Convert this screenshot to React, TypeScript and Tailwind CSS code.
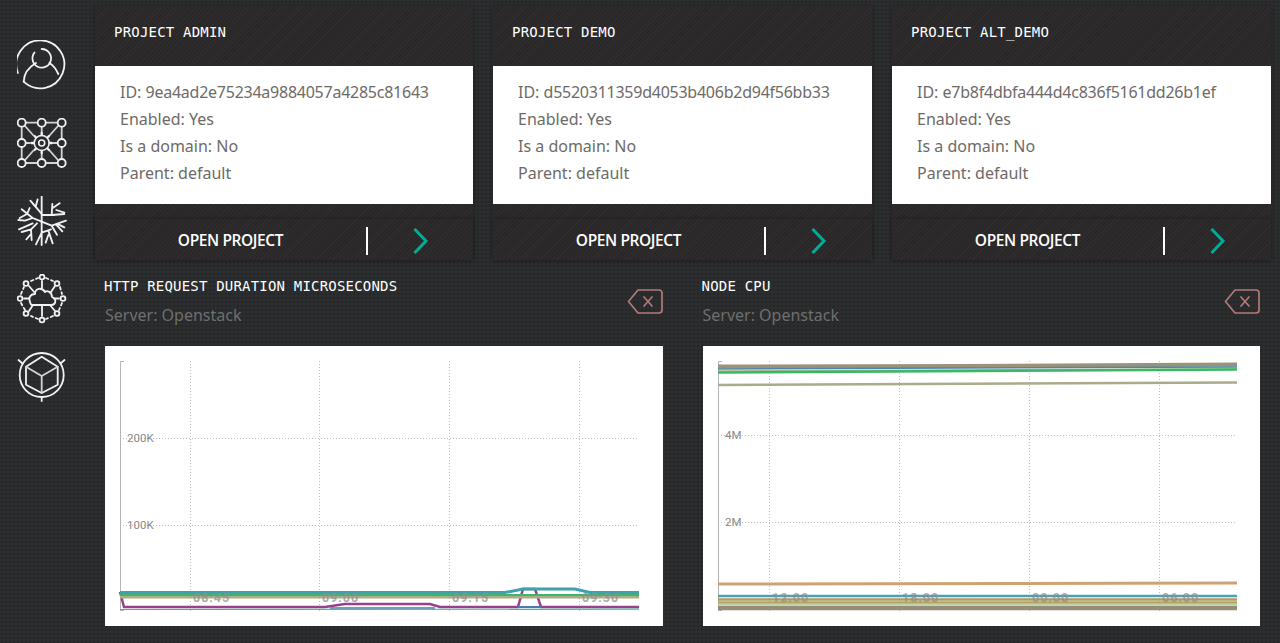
import type { ReactNode } from "react";

const projects = [
  { name: "PROJECT ADMIN", id: "9ea4ad2e75234a9884057a4285c81643" },
  { name: "PROJECT DEMO", id: "d5520311359d4053b406b2d94f56bb33" },
  { name: "PROJECT ALT_DEMO", id: "e7b8f4dbfa444d4c836f5161dd26b1ef" },
];

const stripes =
  "bg-[#2b2929] bg-[repeating-linear-gradient(135deg,#2f2d2d_0,#2f2d2d_1px,#292727_1px,#292727_3px)]";

function Icon({ children }: { children: ReactNode }) {
  return (
    <svg width="50" height="50" viewBox="0 0 50 50" fill="none" stroke="#f2f2f2" strokeWidth="1.800" strokeLinecap="round" strokeLinejoin="round">
      {children}
    </svg>
  );
}

function UserIcon() {
  return (
    <Icon>
      <path d="M6.700 41.700A24 24 0 1 0 0.900 33" />
      <path d="M6.700 41.700C7 33 12 27 19 23" />
      <path d="M24.700 9A9.300 9.300 0 1 1 17.500 12.500" />
      <path d="M32.300 23C36 25 39 29 41.300 34" />
    </Icon>
  );
}

function NetworkIcon() {
  const nodes = [
    [4.7, 4.7], [24.7, 4.7], [44.7, 4.7], [4.7, 25], [44.7, 25], [4.7, 45], [24.7, 45], [44.7, 45],
  ];
  return (
    <Icon>
      <g stroke="#d4d4d4">
        <path d="M9 4.700H20M29 4.700H40M9 45H20M29 45H40M4.700 9V21M4.700 29V41M44.700 9V21M44.700 29V41" />
        <path d="M24.700 9V14M24.700 36V41M9 25H13M36 25H40M8 8 16 17M41 8 33 17M8 42 16 33M41 42 33 33" />
      </g>
      {nodes.map(([x, y]) => (
        <circle key={`${x}-${y}`} cx={x} cy={y} r="4" />
      ))}
      <circle cx="24.700" cy="25" r="3" strokeWidth="1.600" />
      <circle cx="24.700" cy="25" r="7.500" strokeWidth="1.600" />
      <path d="M24.700 15V17M24.700 33V35M14.700 25H16.700M32.700 25H34.700M17.500 18 19 19.500M32 18 30.500 19.500M17.500 32 19 30.500M32 32 30.500 30.500" strokeWidth="2.400" />
    </Icon>
  );
}

function TreeIcon() {
  return (
    <svg width="50" height="50" viewBox="48 18 150 150" fill="none" stroke="#f2f2f2" strokeWidth="5.500" strokeLinecap="round" strokeLinejoin="round">
      <path d="M122 20V95M122 75H160M152 75 190 72M152 75 154 42M154 55 176 40M166 60 190 68" />
      <path d="M122 72 104 50 88 32M104 50 110 28M112 60 96 42" />
      <path d="M122 95 95 84 62 58M78 72 86 54M78 72 56 84M95 84 72 92 52 90M95 100 54 118" />
      <path d="M122 95 152 107 195 92M152 107 168 134M168 101 190 112M165 103 184 124" />
      <path d="M122 95V165M122 128 105 163M122 128 150 118M142 122 155 160M142 135 134 158" />
      <path d="M108 100 90 118 62 126M90 118 92 150M90 132 76 148" />
    </svg>
  );
}

function CloudIcon() {
  const nodes = [
    [25, 3], [40, 9.500], [46, 24.500], [40, 39.500], [25, 46], [9, 39.500], [3, 24.500], [9, 9.500],
  ];
  return (
    <Icon>
      <path d="M15 31H34C39 31 40 25 35 23 35 18 30 16 28 18 25 13 18 14 18 20 14 20 11 23 13 28 13.500 30 14 31 15 31Z" />
      <path d="M25 7V14M25 31V42M12 12 18 19M38 12 34 18M7 24.500H12M37 24.500H42M12 37 16 31M38 37 33 31" />
      <path d="M29 4 36 7M43 13 45 20M45 29 42 36M36 42 29 45M21 45 14 42M8 36 4 29M4 20 7 13M14 7 21 4" strokeDasharray="2.500 3" />
      {nodes.map(([x, y]) => (
        <circle key={`${x}-${y}`} cx={x} cy={y} r="2.400" />
      ))}
    </Icon>
  );
}

function CubeIcon() {
  return (
    <Icon>
      <circle cx="24.700" cy="23" r="22" />
      <path d="M24.700 45.500V49M1.500 8 5.500 11.500M47.500 8 43.500 11.500" />
      <path d="M24.700 4.700 40.700 14.700V32.700L24.700 41 9 32.700V14.700Z" />
      <path d="M9 14.700 24.700 24 40.700 14.700M24.700 24V41" stroke="#d4d4d4" />
    </Icon>
  );
}

function CloseTag() {
  return (
    <svg width="36" height="27" viewBox="0 0 36 27" fill="none" stroke="#b27a7a" strokeWidth="1.700" strokeLinecap="round" strokeLinejoin="round">
      <path d="M1.500 13.500 11 2H32C34 2 35 3 35 5V22C35 24 34 25 32 25H11Z" />
      <path d="M17 9 25 18M25 9 17 18" />
    </svg>
  );
}

function ProjectCard({ name, id }: { name: string; id: string }) {
  return (
    <div className="shadow-[0_1px_5px_#0000004d]">
      <div className={`${stripes} h-[60px] pl-[19px] pt-[17px] font-['DejaVu_Sans_Mono',monospace] text-[14px] leading-[18px] tracking-[0.2px] text-white`}>
        {name}
      </div>
      <div className="h-[138px] bg-white pl-[25px] pt-[13px] font-['Noto_Sans',sans-serif] text-[16px] leading-[27px] text-[#6e6a68]">
        <p>ID: <span className="tracking-[-0.250px]">{id}</span></p>
        <p>Enabled: Yes</p>
        <p>Is a domain: No</p>
        <p>Parent: default</p>
      </div>
      <div className={`${stripes} flex h-[56px] items-end`}>
        <div className="flex h-[41px] w-full items-center pt-0.5 shadow-[0_-1px_3px_#00000030]">
          <span className="w-[271px] text-center font-['Open_Sans',sans-serif] text-[15.500px] font-semibold tracking-[-0.400px] text-white">OPEN PROJECT</span>
          <span className="h-[28px] w-0.5 bg-white" />
          <svg className="ml-[44px]" width="18" height="26" viewBox="0 0 18 26" fill="none" stroke="#00ad96" strokeWidth="3">
            <path d="M2.500 1 14 13 2.500 25" />
          </svg>
        </div>
      </div>
    </div>
  );
}

type Series = { color: string; points: string; width?: number; opacity?: number };

const httpSeries: Series[] = [
  { color: "#9a3f8e", points: "15,246 19,261 220,261 240,258 325,258 335,261 413,261 418,243 430,243 436,261 534,261", width: 2.500 },
  { color: "#4a78b0", points: "225,262 330,262", width: 1.500 },
  { color: "#4a78b0", points: "413,261 436,261", width: 2 },
  { color: "#a9ae86", points: "15,251 534,251", width: 3 },
  { color: "#3fb56b", points: "15,249 534,249", width: 2 },
  { color: "#41a0b0", points: "15,246.500 400,246.500 418,243 470,243 485,246.500 534,246.500", width: 3 },
  { color: "#3cb4a0", points: "15,263.500 534,263.200", width: 1.200 },
];

const cpuSeries: Series[] = [
  { color: "#9c9279", points: "15,20.500 260,20 534,18.500", width: 4 },
  { color: "#4c86a8", points: "15,23 534,21", width: 1.500 },
  { color: "#a9b88a", points: "15,25 534,23", width: 1.500 },
  { color: "#37b866", points: "15,26.500 534,23.500", width: 2.500 },
  { color: "#a9ab8a", points: "15,39 534,36.500", width: 2.500 },
  { color: "#cfa272", points: "15,238 534,237", width: 3 },
  { color: "#46a2b8", points: "15,250 534,250", width: 2.500 },
  { color: "#b09a5c", points: "15,253.500 534,253.500", width: 2.500 },
  { color: "#b8a060", points: "15,256.500 534,256.500", width: 2.500 },
  { color: "#b9d3a8", points: "15,258.800 534,258.800", width: 1.500 },
  { color: "#968c78", points: "15,262 534,262", width: 4.500 },
];

function Chart({ series, vLines, hLines, yLabels, xLabels }: {
  series: Series[];
  vLines: number[];
  hLines: number[];
  yLabels: [string, number][];
  xLabels: string[];
}) {
  return (
    <div className="h-[280px] bg-white">
      <svg width="558" height="280" className="block font-['Roboto',sans-serif]">
        <g stroke="#bdbdbd" strokeDasharray="1 2">
          {vLines.map((x) => <line key={x} x1={x + 0.5} y1="15" x2={x + 0.5} y2="265" />)}
          {hLines.map((y) => <line key={y} x1="15" y1={y + 0.5} x2="534" y2={y + 0.5} />)}
        </g>
        <path d="M19 15.500H15.500V264.500H19" fill="none" stroke="#b5b5b5" />
        {series.map((s) => (
          <polyline key={s.color + s.points} points={s.points} fill="none" stroke={s.color} strokeWidth={s.width ?? 2} opacity={s.opacity ?? 1} />
        ))}
        {yLabels.map(([t, y]) => (
          <text key={t} x="22" y={y} fontSize="11.500" fill="#8a8a8a">{t}</text>
        ))}
        {xLabels.map((t, i) => (
          <text key={t + i} x={vLines[i] + 3} y="256" fontSize="12.500" fontWeight="700" letterSpacing="1" fill="#8f8f8f" opacity="0.75">{t}</text>
        ))}
      </svg>
    </div>
  );
}

function ChartPanel({ title, children }: { title: string; children: ReactNode }) {
  return (
    <div>
      <div className="flex h-[86px] items-start justify-between">
        <div>
          <h3 className="-ml-px mt-[17px] font-['DejaVu_Sans_Mono',monospace] text-[14px] leading-[18px] tracking-[0.2px] text-white">{title}</h3>
          <p className="mt-[9px] font-['Noto_Sans',sans-serif] text-[16px] leading-[22px] text-[#6f6f6f]">Server: Openstack</p>
        </div>
        <div className="mt-[28px]"><CloseTag /></div>
      </div>
      {children}
    </div>
  );
}

export default function App() {
  return (
    <div className="flex h-[643px] w-[1280px] overflow-hidden bg-[#2b2d2f] bg-[radial-gradient(#242628_0.8px,transparent_0.8px)] [background-size:4px_4px]">
      <aside className="flex w-[83px] flex-col items-center gap-7 pt-10">
        <UserIcon />
        <NetworkIcon />
        <TreeIcon />
        <CloudIcon />
        <CubeIcon />
      </aside>
      <main className="ml-3 w-[1176px] pt-[6px]">
        <div className="grid grid-cols-[378px_379px_379px] gap-5">
          {projects.map((p) => <ProjectCard key={p.name} {...p} />)}
        </div>
        <div className="ml-[10px] grid w-[1155px] grid-cols-2 gap-10">
          <ChartPanel title="HTTP REQUEST DURATION MICROSECONDS">
            <Chart
              series={httpSeries}
              vLines={[85, 214, 344, 474]}
              hLines={[92, 179]}
              yLabels={[["200K", 96], ["100K", 183]]}
              xLabels={["08:45", "09:00", "09:15", "09:30"]}
            />
          </ChartPanel>
          <ChartPanel title="NODE CPU">
            <Chart
              series={cpuSeries}
              vLines={[66, 196, 326, 456]}
              hLines={[89, 176, 262]}
              yLabels={[["4M", 93], ["2M", 180]]}
              xLabels={["12:00", "18:00", "00:00", "06:00"]}
            />
          </ChartPanel>
        </div>
      </main>
    </div>
  );
}
